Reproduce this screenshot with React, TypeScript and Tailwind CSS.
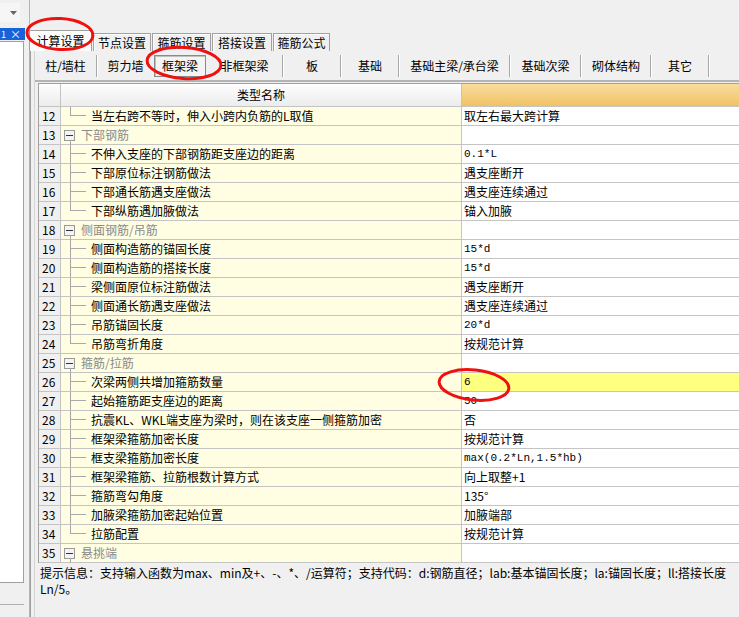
import React from 'react';

type Row = {
    no: number;
    name: string;
    value?: string;
    group?: boolean;
    last?: boolean;
    mono?: boolean;
    hl?: boolean;
};

const rows: Row[] = [
    { no: 12, name: '当左右跨不等时，伸入小跨内负筋的L取值', value: '取左右最大跨计算', last: true },
    { no: 13, name: '下部钢筋', group: true },
    { no: 14, name: '不伸入支座的下部钢筋距支座边的距离', value: '0.1*L', mono: true },
    { no: 15, name: '下部原位标注钢筋做法', value: '遇支座断开' },
    { no: 16, name: '下部通长筋遇支座做法', value: '遇支座连续通过' },
    { no: 17, name: '下部纵筋遇加腋做法', value: '锚入加腋', last: true },
    { no: 18, name: '侧面钢筋/吊筋', group: true },
    { no: 19, name: '侧面构造筋的锚固长度', value: '15*d', mono: true },
    { no: 20, name: '侧面构造筋的搭接长度', value: '15*d', mono: true },
    { no: 21, name: '梁侧面原位标注筋做法', value: '遇支座断开' },
    { no: 22, name: '侧面通长筋遇支座做法', value: '遇支座连续通过' },
    { no: 23, name: '吊筋锚固长度', value: '20*d', mono: true },
    { no: 24, name: '吊筋弯折角度', value: '按规范计算', last: true },
    { no: 25, name: '箍筋/拉筋', group: true },
    { no: 26, name: '次梁两侧共增加箍筋数量', value: '6', mono: true, hl: true },
    { no: 27, name: '起始箍筋距支座边的距离', value: '50', mono: true },
    { no: 28, name: '抗震KL、WKL端支座为梁时，则在该支座一侧箍筋加密', value: '否' },
    { no: 29, name: '框架梁箍筋加密长度', value: '按规范计算' },
    { no: 30, name: '框支梁箍筋加密长度', value: 'max(0.2*Ln,1.5*hb)', mono: true },
    { no: 31, name: '框架梁箍筋、拉筋根数计算方式', value: '向上取整+1' },
    { no: 32, name: '箍筋弯勾角度', value: '135°' },
    { no: 33, name: '加腋梁箍筋加密起始位置', value: '加腋端部' },
    { no: 34, name: '拉筋配置', value: '按规范计算', last: true },
    { no: 35, name: '悬挑端', group: true },
];

const subTabs: { label: string; w: string; sep: boolean; active?: boolean }[] = [
    { label: '柱/墙柱', w: 'w-[61px]', sep: true },
    { label: '剪力墙', w: 'w-[55px]', sep: false },
    { label: '框架梁', w: 'w-[54px]', sep: false, active: true },
    { label: '非框架梁', w: 'w-[75px]', sep: true },
    { label: '板', w: 'w-[56px]', sep: true },
    { label: '基础', w: 'w-[56px]', sep: true },
    { label: '基础主梁/承台梁', w: 'w-[109px]', sep: true },
    { label: '基础次梁', w: 'w-[69px]', sep: true },
    { label: '砌体结构', w: 'w-[68px]', sep: true },
    { label: '其它', w: 'w-[56px]', sep: true },
];

const topTabs = [
    { label: '节点设置', w: 'w-[58px]' },
    { label: '箍筋设置', w: 'w-[59px]' },
    { label: '搭接设置', w: 'w-[60px]' },
    { label: '箍筋公式', w: 'w-[57px]' },
];

function NameCell({ row }: { row: Row }) {
    if (row.group) {
        return (
            <div className="relative flex h-full w-[400px] items-center bg-[#fffee2]">
                <div className="relative ml-[3px] flex h-[11px] w-[11px] items-center justify-center border border-[#9a9a9a] bg-[#f4f4f4]">
                    <div className="h-[1px] w-[7px] bg-[#333]" />
                </div>
                <div className="absolute left-[9px] top-[14px] h-[5px] w-[1px] bg-[#a8a8a8]" />
                <span className="ml-[6px] text-[#8a8a8a]">{row.name}</span>
            </div>
        );
    }
    return (
        <div className="relative flex h-full w-[400px] items-center bg-[#fffee2]">
            <div
                className={`absolute left-[9px] top-0 w-[1px] bg-[#a8a8a8] ${row.last ? 'h-[9px]' : 'h-[18px]'}`}
            />
            <div className="absolute left-[9px] top-[8px] h-[1px] w-[16px] bg-[#a8a8a8]" />
            <span className="ml-[30px] text-[#000]">{row.name}</span>
        </div>
    );
}

export default function App() {
    return (
        <div
            className="relative flex h-[617px] w-[739px] overflow-hidden bg-[#f0f0f0] text-[12px] text-black"
            style={{ fontFamily: "'Noto Sans CJK SC', sans-serif" }}
        >
            {/* left dock */}
            <div className="flex w-[25px] shrink-0 flex-col">
                <div className="h-[28px] pt-[3px]">
                    <div className="flex h-[19px] w-[20px] items-center justify-end bg-[#f6f6f6] pr-[3px]">
                        <svg width="7" height="4" viewBox="0 0 7 4">
                            <path d="M0 0h7L3.5 4z" fill="#666" />
                        </svg>
                    </div>
                </div>
                <div className="flex h-[12px] items-center justify-between bg-[#1764d8] pl-[1px] pr-[4px] text-[11px] leading-none text-white">
                    <span className="text-[9px]">1</span>
                    <span>×</span>
                </div>
                <div className="mt-[1px] h-[542px] w-[24px] border border-l-0 border-[#a0a0a0] bg-white" />
                <div className="mt-[21px] h-[1px] w-[24px] bg-[#b0b0b0]" />
            </div>

            <div className="ml-[4px] w-[1px] shrink-0 bg-[#b4b4b4]" />

            {/* main */}
            <div className="flex min-w-0 flex-1 flex-col">
                {/* tabs */}
                <div className="flex h-[51px] items-end pt-[30px]">
                    <div className="-ml-[1px] flex h-[21px] w-[63px] items-center justify-center border border-b-0 border-[#a0a0a0] bg-[#fcfcfc]">
                        计算设置
                    </div>
                    {topTabs.map((t) => (
                        <div
                            key={t.label}
                            className={`ml-[1px] flex h-[18px] ${t.w} items-center justify-center border border-b-0 border-[#a0a0a0] bg-[#f0f0f0] shadow-[inset_1px_1px_0_#fff]`}
                        >
                            {t.label}
                        </div>
                    ))}
                </div>

                {/* panel */}
                <div className="flex flex-1 flex-col border-l border-[#a0a0a0] pl-[3px]">
                    <div className="flex flex-1 flex-col border-l border-[#d4d4d4]">
                        {/* sub tabs */}
                        <div className="flex h-[31px] items-center border-b-2 border-[#b4b4b4]">
                            {subTabs.map((s) => (
                                <React.Fragment key={s.label}>
                                    {s.active ? (
                                        <div className={`${s.w} flex h-[22px] items-center justify-center`}>
                                            <div className="flex h-[22px] w-[52px] items-center justify-center border border-[#8a8a8a] bg-[#f4f4f4] shadow-[inset_1px_1px_0_#c0c0c0]">
                                                {s.label}
                                            </div>
                                        </div>
                                    ) : (
                                        <div className={`${s.w} flex h-[22px] items-center justify-center`}>
                                            {s.label}
                                        </div>
                                    )}
                                    {s.sep && <div className="h-[22px] w-[2px] border-l border-[#a8a8a8] bg-white" />}
                                </React.Fragment>
                            ))}
                        </div>

                        {/* table */}
                        <div className="ml-[3px] mt-[1px] flex flex-col border-l border-t border-[#a0a0a0]">
                            <div className="flex h-[23px] border-b border-[#c4c4c4]">
                                <div className="w-[22px] border-r border-[#c4c4c4] bg-gradient-to-b from-[#fefefe] to-[#ececec]" />
                                <div className="flex w-[401px] items-center justify-center border-r border-[#c4c4c4] bg-gradient-to-b from-[#fefefe] to-[#ececec]">
                                    类型名称
                                </div>
                                <div className="flex-1 bg-gradient-to-b from-[#f9dc9e] to-[#f1c263]" />
                            </div>
                            {rows.map((r) => (
                                <div key={r.no} className="flex h-[19px] border-b border-[#c4c4c4]">
                                    <div className="flex w-[22px] items-center border-r border-[#c4c4c4] bg-[#f0f0f0] pl-[3px] text-[12px]">
                                        {r.no}
                                    </div>
                                    <div className="border-r border-[#c4c4c4]">
                                        <NameCell row={r} />
                                    </div>
                                    <div
                                        className={`flex flex-1 items-center pl-[2px] ${r.hl ? 'bg-[#ffff80]' : 'bg-white'}`}
                                        style={r.mono ? { fontFamily: "'Liberation Mono', 'Noto Sans CJK SC', monospace", fontSize: '11px' } : undefined}
                                    >
                                        {r.value}
                                    </div>
                                </div>
                            ))}
                        </div>

                        {/* hint */}
                        <div className="whitespace-nowrap pl-[5px] pt-[2px] text-[12px] leading-[16px]">
                            <div>提示信息：支持输入函数为max、min及+、-、*、/运算符；支持代码：d:钢筋直径；lab:基本锚固长度；la:锚固长度；ll:搭接长度</div>
                            <div>Ln/5。</div>
                        </div>
                    </div>
                </div>
            </div>

            {/* red annotation marks */}
            <svg className="pointer-events-none absolute inset-0" width="739" height="617">
                <ellipse cx="60" cy="34" rx="33" ry="15.5" fill="none" stroke="#ee1111" strokeWidth="3" transform="rotate(3 60 34)" />
                <ellipse cx="184" cy="63" rx="37" ry="15.5" fill="none" stroke="#ee1111" strokeWidth="3" transform="rotate(4 184 63)" />
                <ellipse cx="474" cy="385" rx="35" ry="15" fill="none" stroke="#ee1111" strokeWidth="3" transform="rotate(6 474 385)" />
            </svg>
        </div>
    );
}
